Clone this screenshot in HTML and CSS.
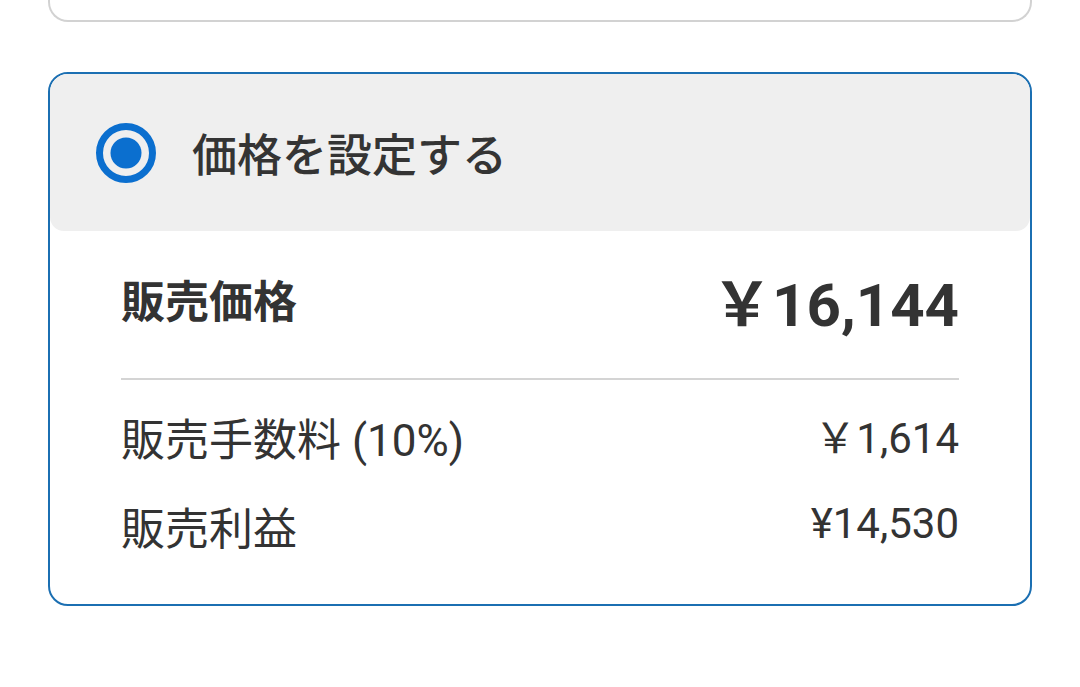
FILE: index.html
```html
<!DOCTYPE html>
<html lang="ja">
<head>
<meta charset="utf-8">
<title>価格を設定する</title>
<link rel="stylesheet" href="styles.css">
</head>
<body>
  <div class="prev-card"></div>
  <section class="price-card">
    <div class="option-header">
      <svg class="radio" width="62" height="62" viewBox="0 0 62 62" aria-hidden="true">
        <circle cx="31" cy="31" r="26.5" fill="none" stroke="#0b6fcf" stroke-width="7"/>
        <circle cx="31" cy="31" r="15.5" fill="#0b6fcf"/>
      </svg>
      <span class="option-label">価格を設定する</span>
    </div>
    <div class="price-body">
      <div class="row main-row">
        <span class="label">販売価格</span>
        <span class="value"><span class="yen">￥</span>16,144</span>
      </div>
      <div class="divider"></div>
      <div class="row sub-row">
        <span class="label">販売手数料 (10%)</span>
        <span class="value"><span class="yen">￥</span>1,614</span>
      </div>
      <div class="row sub-row">
        <span class="label">販売利益</span>
        <span class="value">¥14,530</span>
      </div>
    </div>
  </section>
</body>
</html>
```
FILE: styles.css
```css
html, body {
  margin: 0;
  padding: 0;
  background: #ffffff;
}

body {
  font-family: Roboto, "Noto Sans CJK JP", sans-serif;
  color: #333333;
}

.prev-card {
  margin: 0 48px;
  height: 20px;
  border: 2px solid #d2d2d2;
  border-top: none;
  border-radius: 0 0 20px 20px;
}

.price-card {
  margin: 50px 48px 0;
  border: 2px solid #1b6fb2;
  border-radius: 20px;
  overflow: hidden;
}

.option-header {
  height: 157px;
  background: #efefef;
  border-radius: 0 0 14px 14px;
  display: flex;
  align-items: center;
  padding-left: 45px;
  gap: 35px;
}

.radio {
  display: block;
  flex: none;
}

.option-label {
  font-family: "Noto Sans CJK JP", sans-serif;
  font-size: 45px;
  font-weight: 500;
  color: #343434;
  line-height: 1;
}

.price-body {
  padding: 27px 71px 48px;
}

.row {
  display: flex;
  justify-content: space-between;
  align-items: center;
}

.main-row {
  height: 82px;
}

.main-row .label {
  font-family: "Noto Sans CJK JP", sans-serif;
  font-size: 44px;
  font-weight: 700;
}

.main-row .value {
  font-size: 60px;
  font-weight: 700;
}

.yen {
  font-family: "Noto Sans CJK JP", sans-serif;
}

.divider {
  height: 2px;
  background: #d4d4d4;
  margin: 38px 0 27px;
}

.sub-row {
  height: 60px;
}

.sub-row + .sub-row {
  margin-top: 29px;
}

.sub-row .label {
  font-family: Roboto, "Noto Sans CJK JP", sans-serif;
  font-size: 44px;
  font-weight: 400;
}

.sub-row .value {
  font-size: 42px;
  font-weight: 400;
  margin-bottom: 6px;
}
```
